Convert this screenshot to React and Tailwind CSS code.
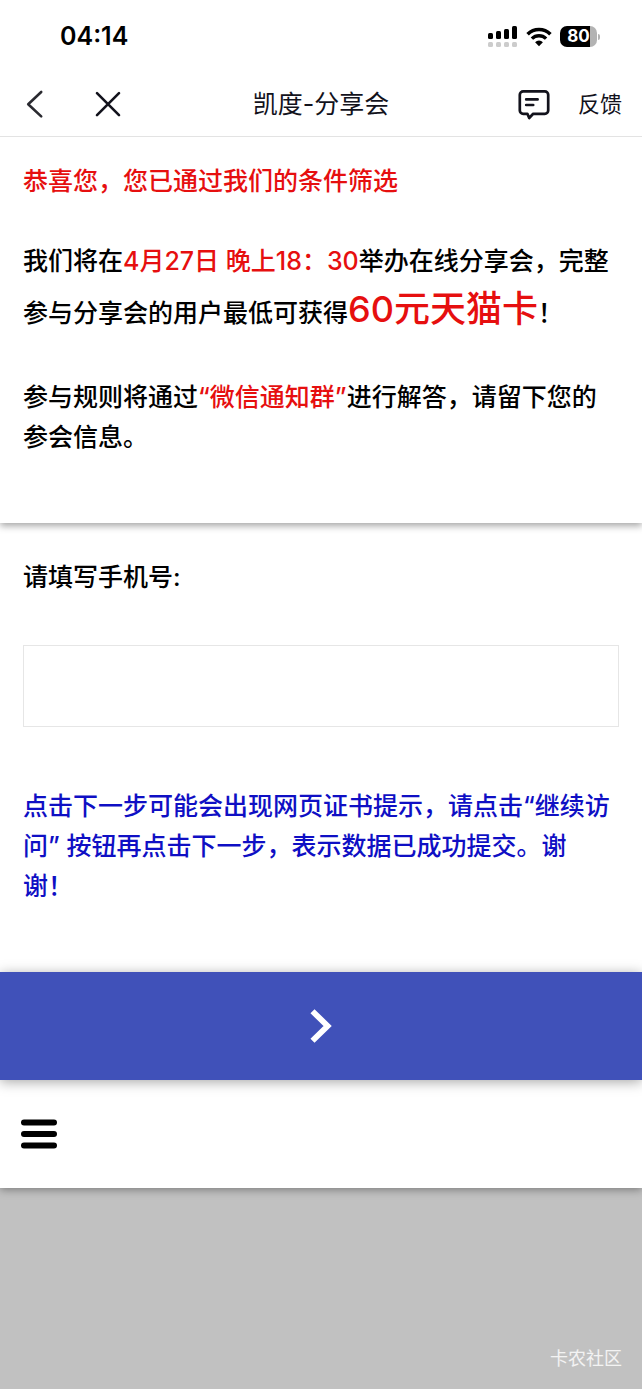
import React, { useState } from "react";

const SignalIcon = () => (
  <svg className="w-[30px] h-[22px]" viewBox="0 0 30 22" aria-hidden="true">
    <g fill="#000">
      <rect x="0" y="7" width="5" height="6" rx="1.5" />
      <rect x="8" y="5" width="5" height="8" rx="1.5" />
      <rect x="16" y="3" width="5" height="10" rx="1.5" />
      <rect x="24" y="0" width="5" height="13" rx="1.5" />
    </g>
    <g fill="#ccc">
      <rect x="0" y="16" width="5" height="5" rx="1.5" />
      <rect x="8" y="16" width="5" height="5" rx="1.5" />
      <rect x="16" y="16" width="5" height="5" rx="1.5" />
      <rect x="24" y="16" width="5" height="5" rx="1.5" />
    </g>
  </svg>
);

const WifiIcon = () => (
  <svg className="w-[26px] h-[20px]" viewBox="0 0 26 20" fill="none" aria-hidden="true">
    <path d="M1.6 7.2a16.2 16.2 0 0 1 22.8 0" stroke="#000" strokeWidth="3.6" />
    <path d="M5.9 11.6a10.1 10.1 0 0 1 14.2 0" stroke="#000" strokeWidth="3.4" />
    <path d="M13 19.2l-3.9-4a5.6 5.6 0 0 1 7.8 0z" fill="#000" />
  </svg>
);

const StatusBar = () => (
  <div className="flex items-center justify-between h-[73px] pl-[60px] pr-[42px] text-black">
    <span className="text-[25px] font-semibold">04:14</span>
    <div className="flex items-center gap-2">
      <SignalIcon />
      <WifiIcon />
      <div className="flex items-center gap-px">
        <div className="flex items-center justify-center w-[37px] h-[21px] rounded-[7px] bg-linear-to-r from-black from-80% to-[#b3b3b3] to-80% text-white text-[17px] leading-none font-bold">
          80
        </div>
        <span className="w-[2px] h-[6px] rounded-r-full bg-[#b3b3b3]" />
      </div>
    </div>
  </div>
);

const NavBar = () => (
  <header className="flex items-center h-16 px-5 border-b border-[#e3e3e3] text-[#12121c]">
    <div className="flex flex-1 items-center gap-[44px]">
      <button type="button" aria-label="返回">
        <svg className="w-[30px] h-[30px]" viewBox="0 0 30 30" fill="none" stroke="#2a2a30" strokeWidth="2.6" strokeLinecap="round" strokeLinejoin="round">
          <path d="M21.2 2L8.2 14.2l13 12.2" />
        </svg>
      </button>
      <button type="button" aria-label="关闭">
        <svg className="w-[28px] h-[28px]" viewBox="0 0 28 28" fill="none" stroke="currentColor" strokeWidth="2.6" strokeLinecap="round">
          <path d="M3 2.2l22 22M25 2.2L3 24.2" />
        </svg>
      </button>
    </div>
    <h1 className="text-[25px]">凯度-分享会</h1>
    <div className="flex flex-1 items-center justify-end">
      <button type="button" className="flex items-center gap-7 text-[22px]">
        <svg className="w-[32px] h-[30px]" viewBox="0 0 32 30" fill="none" stroke="currentColor" strokeWidth="2.7" strokeLinecap="round" strokeLinejoin="round">
          <path d="M5.2 1.4h21.6a3.4 3.4 0 0 1 3.4 3.4v15.6a3.4 3.4 0 0 1-3.4 3.4H15.2L11.2 28l-1.8-4.2H5.2a3.4 3.4 0 0 1-3.4-3.4V4.8a3.4 3.4 0 0 1 3.4-3.4z" />
          <path d="M8.2 9.4h11.4M8.2 15h7" />
        </svg>
        反馈
      </button>
    </div>
  </header>
);

const App = () => {
  const [phone, setPhone] = useState("");

  return (
    <div className="flex flex-col min-h-screen bg-[#c1c1c1] text-black font-['Inter','Noto_Sans_CJK_SC',sans-serif]">
      <div className="relative z-20 bg-white">
        <StatusBar />
        <NavBar />
      </div>

      <form className="flex flex-col" onSubmit={(e) => e.preventDefault()}>
        <section className="relative z-10 px-[23px] pt-6 pb-[66px] bg-white text-[25px] leading-10 font-medium shadow-[0_3px_7px_rgba(0,0,0,0.35)]">
          <p className="text-[#e60f0f]">恭喜您，您已通过我们的条件筛选</p>
          <p className="mt-10">
            我们将在<span className="text-[#e60f0f]">4月27日 晚上18：30</span>举办在线分享会，完整参与分享会的用户最低可获得
            <span className="text-[36px] leading-[56px] text-[#e60f0f]">60元天猫卡</span>！
          </p>
          <p className="mt-10">
            参与规则将通过<span className="text-[#e60f0f]">“微信通知群”</span>进行解答，请留下您的参会信息。
          </p>
        </section>

        <section className="px-[23px] pt-[34px] pb-[66px] bg-white text-[25px] leading-10 font-medium">
          <label htmlFor="phone" className="block">请填写手机号:</label>
          <input
            id="phone"
            type="tel"
            name="phone"
            value={phone}
            onChange={(e) => setPhone(e.target.value)}
            className="block w-full h-[82px] mt-12 px-4 border border-[#e6e6e6] bg-white outline-none"
          />
          <p className="mt-[59px] pr-1 text-[#0f0fc4]">
            点击下一步可能会出现网页证书提示，请点击“继续访问” 按钮再点击下一步，表示数据已成功提交。谢谢！
          </p>
        </section>

        <button
          type="submit"
          aria-label="下一步"
          className="relative z-10 flex items-center justify-center h-[108px] bg-[#4051b9] shadow-[0_2px_12px_rgba(0,0,0,0.35)]"
        >
          <svg className="w-[22px] h-[34px]" viewBox="0 0 22 34" fill="none" stroke="#fff" strokeWidth="5.8">
            <path d="M2.5 2.2L17.6 17 2.5 31.8" />
          </svg>
        </button>
      </form>

      <nav className="flex items-center h-[108px] px-5 bg-white shadow-[0_2px_8px_rgba(0,0,0,0.35)]">
        <button type="button" aria-label="菜单">
          <svg className="w-[38px] h-[30px]" viewBox="0 0 38 30" stroke="#000" strokeWidth="6" strokeLinecap="round">
            <path d="M4 3.4h30M4 15h30M4 26.6h30" />
          </svg>
        </button>
      </nav>

      <footer className="mt-auto px-5 pb-4 text-right text-lg text-white/80">卡农社区</footer>
    </div>
  );
};

export default App;
